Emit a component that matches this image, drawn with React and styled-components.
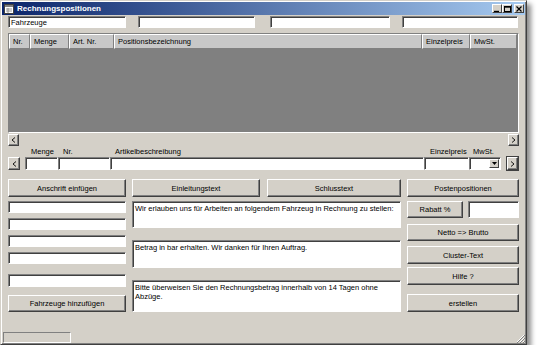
import React from "react"
import styled, { createGlobalStyle } from "styled-components"

const GlobalStyle = createGlobalStyle`
  html, body { margin: 0; padding: 0; background: #fff; }
  body { font-family: "Liberation Sans", Arial, sans-serif; font-size: 7.5px; color: #000; }
  * { box-sizing: border-box; }
`

const Window = styled.div`
  width: 527px;
  height: 345px;
  background: #d4d0c8;
  border: 1px solid;
  border-color: #d4d0c8 #404040 #404040 #d4d0c8;
  box-shadow: inset 1px 1px #fff, inset -1px -1px #808080, 4px 4px 5px rgba(0, 0, 0, 0.45);
  padding: 1px;
  display: flex;
  flex-direction: column;
`

const TitleBar = styled.div`
  height: 13px;
  display: flex;
  align-items: center;
  padding: 0 1px 0 2px;
  background: linear-gradient(to right, #0a246a, #a6caf0);
  color: #fff;
  font-weight: bold;
  font-size: 8px;
`

const TitleText = styled.span`
  margin-left: 3px;
  flex: 1;
`

const CtlButton = styled.div`
  width: 10px;
  height: 9px;
  margin-left: ${p => p.$gap || 0}px;
  background: #d4d0c8;
  border: 1px solid;
  border-color: #fff #404040 #404040 #fff;
  display: flex;
  align-items: center;
  justify-content: center;
`

const Content = styled.div`
  flex: 1;
  display: flex;
  flex-direction: column;
  padding: 1px 0 0 6px;
`

const Row = styled.div`
  display: flex;
  align-items: flex-start;
`

const Field = styled.div`
  width: ${p => p.$w}px;
  height: ${p => p.$h || 12}px;
  margin-left: ${p => p.$ml || 0}px;
  margin-top: ${p => p.$mt || 0}px;
  background: #fff;
  border: 1px solid;
  border-color: #808080 #fff #fff #808080;
  box-shadow: inset 1px 1px #404040;
  padding: 1px 2px;
  line-height: 9px;
  white-space: nowrap;
  overflow: hidden;
`

const Grid = styled.div`
  margin-top: 5px;
  width: 511px;
  height: 100px;
  border: 1px solid;
  border-color: #808080 #fff #fff #808080;
  background: #808080;
`

const GridHead = styled.div`
  display: flex;
  height: 15px;
`

const HeadCell = styled.div`
  width: ${p => p.$w}px;
  height: 15px;
  background: #c8c8c8;
  border: 1px solid;
  border-color: #fff #808080 #808080 #fff;
  padding: 2px 3px 0;
  white-space: nowrap;
  overflow: hidden;
`

const ScrollRow = styled.div`
  margin-top: 1px;
  width: 511px;
  height: 12px;
  display: flex;
  justify-content: space-between;
`

const SmallButton = styled.div`
  width: ${p => p.$w || 11}px;
  height: ${p => p.$h || 12}px;
  background: #d4d0c8;
  border: 1px solid;
  border-color: #fff #404040 #404040 #fff;
  box-shadow: inset -1px -1px #808080;
  display: flex;
  align-items: center;
  justify-content: center;
  font-size: 8px;
  outline: ${p => (p.$focus ? "1px solid #404040" : "none")};
`

const EntryGrid = styled.div`
  display: grid;
  grid-template-columns: 12px 5px 33px 52px 314px 45px 32px 6px 11px;
  grid-template-rows: 11px 13px;
`

const ColLabel = styled.div`
  grid-column: ${p => p.$col};
  padding-left: ${p => p.$pl || 5}px;
  align-self: center;
  white-space: nowrap;
`

const EntryField = styled(Field)`
  grid-column: ${p => p.$col};
  grid-row: 2;
  width: auto;
  height: 13px;
`

const Combo = styled(EntryField)`
  display: flex;
  justify-content: flex-end;
  padding: 1px;
`

const ComboArrow = styled.div`
  width: 10px;
  height: 9px;
  background: #d4d0c8;
  border: 1px solid;
  border-color: #fff #404040 #404040 #fff;
  display: flex;
  align-items: center;
  justify-content: center;
`

const Bottom = styled.div`
  margin-top: 9px;
  display: grid;
  grid-template-columns: 118px 269px 112px;
  column-gap: 6px;
`

const Column = styled.div`
  display: flex;
  flex-direction: column;
`

const Button = styled.div`
  height: ${p => p.$h || 18}px;
  width: ${p => (p.$w ? `${p.$w}px` : "auto")};
  margin-top: ${p => p.$mt || 0}px;
  background: #d4d0c8;
  border: 1px solid;
  border-color: #fff #404040 #404040 #fff;
  box-shadow: inset -1px -1px #808080;
  display: flex;
  align-items: center;
  justify-content: center;
  white-space: nowrap;
`

const LeftField = styled(Field)`
  width: 118px;
`

const TextBox = styled.div`
  height: ${p => p.$h}px;
  margin-top: ${p => p.$mt || 0}px;
  background: #fff;
  border: 1px solid;
  border-color: #808080 #fff #fff #808080;
  box-shadow: inset 1px 1px #404040;
  padding: 2px 2px;
  line-height: 9px;
`

const ButtonPair = styled.div`
  display: grid;
  grid-template-columns: 128px 134px;
  column-gap: 7px;
`

const RabattRow = styled.div`
  margin-top: 4px;
  display: flex;
  justify-content: space-between;
`

const StatusBar = styled.div`
  height: 12px;
  display: flex;
  align-items: flex-end;
  justify-content: space-between;
  padding: 0 0 0 1px;
`

const StatusPanel = styled.div`
  width: 68px;
  height: 11px;
  border: 1px solid;
  border-color: #808080 #fff #fff #808080;
`

function TitleIcon() {
  return (
    <svg width="10" height="10" viewBox="0 0 10 10">
      <rect x="0.5" y="0.5" width="9" height="9" fill="#fff" stroke="#404040" />
      <rect x="1" y="1" width="8" height="2" fill="#808080" />
      <path d="M2 5h6M2 7h6M4 4v5" stroke="#808080" strokeWidth="0.8" />
    </svg>
  )
}

function Caret({ dir }) {
  return (
    <svg width="5" height="6" viewBox="0 0 5 6">
      <path d={dir === "left" ? "M4 0.5L1 3l3 2.5" : "M1 0.5L4 3l-3 2.5"} fill="none" stroke="#000" strokeWidth="0.9" />
    </svg>
  )
}

const headCols = [
  ["Nr.", 21],
  ["Menge", 39],
  ["Art. Nr.", 45],
  ["Positionsbezeichnung", 308],
  ["Einzelpreis", 48],
  ["MwSt.", 47],
]

export default function App() {
  return (
    <>
      <GlobalStyle />
      <Window>
        <TitleBar>
          <TitleIcon />
          <TitleText>Rechnungspositionen</TitleText>
          <CtlButton>
            <svg width="6" height="6" viewBox="0 0 6 6"><path d="M0 5.5h5" stroke="#000" strokeWidth="1.4" /></svg>
          </CtlButton>
          <CtlButton>
            <svg width="7" height="6" viewBox="0 0 7 6"><rect x="0.5" y="0.5" width="6" height="5" fill="none" stroke="#000" /><path d="M0 1.2h7" stroke="#000" /></svg>
          </CtlButton>
          <CtlButton $gap={2}>
            <svg width="6" height="6" viewBox="0 0 6 6"><path d="M0.5 0.5l5 5M5.5 0.5l-5 5" stroke="#000" strokeWidth="1.2" /></svg>
          </CtlButton>
        </TitleBar>

        <Content>
          <Row>
            <Field $w={118}>Fahrzeuge</Field>
            <Field $w={117} $ml={12} />
            <Field $w={120} $ml={15} />
            <Field $w={116} $ml={12} />
          </Row>

          <Grid>
            <GridHead>
              {headCols.map(([label, w]) => (
                <HeadCell key={label} $w={w}>{label}</HeadCell>
              ))}
            </GridHead>
          </Grid>

          <ScrollRow>
            <SmallButton><Caret dir="left" /></SmallButton>
            <SmallButton><Caret dir="right" /></SmallButton>
          </ScrollRow>

          <EntryGrid>
            <ColLabel $col={3} $pl={6}>Menge</ColLabel>
            <ColLabel $col={4}>Nr.</ColLabel>
            <ColLabel $col={5}>Artikelbeschreibung</ColLabel>
            <ColLabel $col={6} $pl={6}>Einzelpreis</ColLabel>
            <ColLabel $col={7} $pl={4}>MwSt.</ColLabel>
            <SmallButton style={{ gridColumn: 1, gridRow: 2 }} $w={12} $h={13}><Caret dir="left" /></SmallButton>
            <EntryField $col={3} />
            <EntryField $col={4} />
            <EntryField $col={5} />
            <EntryField $col={6} />
            <Combo $col={7}>
              <ComboArrow>
                <svg width="5" height="3" viewBox="0 0 5 3"><path d="M0 0h5L2.5 3z" fill="#000" /></svg>
              </ComboArrow>
            </Combo>
            <SmallButton style={{ gridColumn: 9, gridRow: 2 }} $w={11} $h={13} $focus><Caret dir="right" /></SmallButton>
          </EntryGrid>

          <Bottom>
            <Column>
              <Button>Anschrift einfügen</Button>
              <LeftField $mt={4} />
              <LeftField $mt={5} />
              <LeftField $mt={5} />
              <LeftField $mt={5} />
              <LeftField $mt={10} $h={13} />
              <Button $mt={8} $h={17}>Fahrzeuge hinzufügen</Button>
            </Column>

            <Column>
              <ButtonPair>
                <Button>Einleitungstext</Button>
                <Button>Schlusstext</Button>
              </ButtonPair>
              <TextBox $mt={4} $h={27}>Wir erlauben uns für Arbeiten an folgendem Fahrzeug in Rechnung zu stellen:</TextBox>
              <TextBox $mt={12} $h={28}>Betrag in bar erhalten. Wir danken für Ihren Auftrag.</TextBox>
              <TextBox $mt={12} $h={32}>Bitte überweisen Sie den Rechnungsbetrag innerhalb von 14 Tagen ohne Abzüge.</TextBox>
            </Column>

            <Column>
              <Button>Postenpositionen</Button>
              <RabattRow>
                <Button $w={56} $h={17}>Rabatt %</Button>
                <Field $w={51} $h={17} />
              </RabattRow>
              <Button $mt={6} $h={17}>Netto =&gt; Brutto</Button>
              <Button $mt={5} $h={18}>Cluster-Text</Button>
              <Button $mt={3} $h={18}>Hilfe ?</Button>
              <Button $mt={9} $h={18}>erstellen</Button>
            </Column>
          </Bottom>
        </Content>

        <StatusBar>
          <StatusPanel />
          <svg width="10" height="10" viewBox="0 0 10 10">
            <path d="M9 2L2 9M9 5L5 9M9 8L8 9" stroke="#fff" strokeWidth="1" />
            <path d="M10 2L2 10M10 5L5 10M10 8L8 10" stroke="#808080" strokeWidth="1" />
          </svg>
        </StatusBar>
      </Window>
    </>
  )
}
